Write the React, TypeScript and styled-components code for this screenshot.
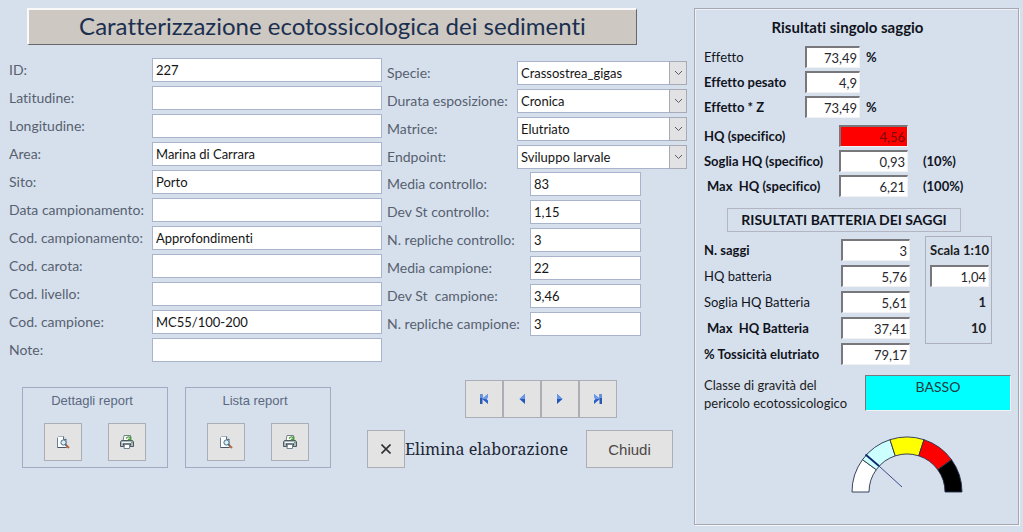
import React, { useId } from "react";
import styled, { createGlobalStyle } from "styled-components";

const GlobalStyle = createGlobalStyle`
  * { box-sizing: border-box; }
  body {
    margin: 0;
    background: #d6e0ed;
    font-family: Lato, "Open Sans", sans-serif;
    font-size: 13px;
    font-variant-ligatures: none;
    color: #1c1c22;
  }
  input, select, button { font: inherit; color: inherit; margin: 0; border-radius: 0; }
`;

const Page = styled.main`
  display: grid;
  grid-template-columns: minmax(0, 1fr) 325px;
  gap: 7px;
  padding: 8px 4px 6px 9px;
`;

const Workspace = styled.div`
  display: flex;
  flex-direction: column;
`;

const Title = styled.h1`
  margin: 0 50px 0 18px;
  height: 37px;
  line-height: 32px;
  text-align: center;
  font-size: 24px;
  font-weight: 400;
  color: #1b3050;
  background: #cdc8c1;
  border: solid;
  border-width: 2px 1px 1px 2px;
  border-color: #fafafa #66666c #66666c #fafafa;
  white-space: nowrap;
`;

const Columns = styled.div`
  display: flex;
  gap: 5px;
  margin-top: 13px;
`;

const Column = styled.div<{ $grow: number; $top?: number }>`
  flex: ${(p) => p.$grow} 1 0;
  min-width: 0;
  display: flex;
  flex-direction: column;
  gap: 3px;
  padding-top: ${(p) => p.$top ?? 0}px;
`;

const Stack = styled.div`
  display: flex;
  flex-direction: column;
  gap: 4px;
`;

const FieldRow = styled.div<{ $label: number; $end?: number }>`
  display: grid;
  grid-template-columns: ${(p) => p.$label}px minmax(0, 1fr);
  align-items: center;
  height: 24px;
  padding-right: ${(p) => p.$end ?? 0}px;
`;

const FieldLabel = styled.label`
  color: #56606f;
  font-size: 14px;
  line-height: 20px;
  white-space: pre;
`;

const TextBox = styled.input`
  width: 100%;
  height: 24px;
  padding: 0 3px;
  border: 1px solid #a9b3cb;
  background: #fff;
  color: #151515;
  outline: none;
`;

const SelectWrap = styled.div`
  position: relative;
  height: 24px;
`;

const SelectBox = styled.select`
  width: 100%;
  height: 24px;
  padding: 0 20px 0 3px;
  border: 1px solid #a9b3cb;
  background: #fff;
  color: #151515;
  appearance: none;
  outline: none;
`;

const SelectArrow = styled.span`
  position: absolute;
  top: 0;
  right: 0;
  width: 18px;
  height: 24px;
  display: grid;
  place-items: center;
  background: #e2e2e4;
  border: 1px solid #a7abb5;
  pointer-events: none;
`;

const Footer = styled.div`
  display: flex;
  justify-content: space-between;
  margin-top: 18px;
  padding: 0 14px 0 13px;
`;

const Reports = styled.div`
  display: flex;
  gap: 17px;
  padding-top: 7px;
`;

const ReportBox = styled.section`
  width: 146px;
  height: 81px;
  border: 1px solid #a0acc3;
  display: flex;
  flex-direction: column;
  align-items: center;
  gap: 12px;
  padding-top: 3px;
`;

const ReportTitle = styled.h2`
  margin: 0;
  padding-right: 6px;
  font: 400 13px/20px "Liberation Sans", Arial, sans-serif;
  color: #5b6880;
`;

const ReportButtons = styled.div`
  display: flex;
  gap: 26px;
`;

const ToolButton = styled.button<{ $wide?: boolean }>`
  width: ${(p) => (p.$wide ? 87 : 38)}px;
  height: 38px;
  padding: 0;
  display: grid;
  place-items: center;
  background: #e3e3e4;
  border: 1px solid #abaeb6;
  color: #4d4744;
  font: 400 15px "Liberation Sans", Arial, sans-serif;
`;

const Actions = styled.div`
  display: flex;
  flex-direction: column;
  gap: 12px;
`;

const NavButtons = styled.div`
  display: flex;
  align-self: center;
  padding-left: 41px;
`;

const ActionRow = styled.div`
  display: flex;
  align-items: center;
`;

const DeleteLabel = styled.label`
  width: 181px;
  font: 400 16px "Noto Serif", Cambria, "Liberation Serif", serif;
  color: #1d2735;
  white-space: nowrap;
`;

const Panel = styled.section`
  border: 1px solid #a4a8b2;
  box-shadow: inset 1px 1px 0 #eef2f8, 1px 1px 0 #f4f6fa;
  padding: 8px 7px 0 9px;
  min-height: 517px;
`;

const PanelTitle = styled.h2`
  margin: 0 0 9px;
  padding-right: 20px;
  font-size: 15px;
  line-height: 20px;
  font-weight: 700;
  text-align: center;
  color: #10131c;
`;

const ResultGrid = styled.div<{ $label: number; $value: number; $gap: number; $top?: number }>`
  display: grid;
  grid-template-columns: ${(p) => p.$label}px ${(p) => p.$value}px auto;
  grid-auto-rows: 22px;
  row-gap: ${(p) => p.$gap}px;
  align-items: center;
  margin-top: ${(p) => p.$top ?? 0}px;
`;

const ResultLabel = styled.label<{ $bold?: boolean; $indent?: boolean }>`
  font-weight: ${(p) => (p.$bold ? 700 : 400)};
  font-size: 13px;
  padding-left: ${(p) => (p.$indent ? 3 : 0)}px;
  line-height: 18px;
  color: #10131c;
  white-space: pre;
`;

const ResultBox = styled.input<{ $alert?: boolean }>`
  width: 100%;
  height: 22px;
  padding: 0 2px;
  text-align: right;
  outline: none;
  color: ${(p) => (p.$alert ? "#7d0b0b" : "#26262c")};
  background: ${(p) => (p.$alert ? "#ff0000" : "#fff")};
  border: 2px solid;
  border-color: #77777c #f2f2f4 #f2f2f4 #77777c;
  border-width: 2px 1px 1px 2px;
`;

const Unit = styled.span<{ $start: number }>`
  padding-left: ${(p) => p.$start}px;
  font-weight: 700;
  font-size: 13px;
  color: #10131c;
`;

const BatteryTitle = styled.h2`
  width: 234px;
  height: 24px;
  margin: 11px 0 0 23px;
  border: 1px solid #b3b6c2;
  font-size: 14px;
  line-height: 22px;
  font-weight: 700;
  text-align: center;
  color: #10131c;
`;

const Battery = styled.div`
  display: flex;
  gap: 15px;
  margin-top: 4px;
`;

const ScaleBox = styled.fieldset`
  width: 67px;
  height: 108px;
  min-width: 0;
  margin: 0;
  padding: 2px 2px 0 4px;
  border: 1px solid #adb0bd;
  display: grid;
  grid-auto-rows: 22px;
  row-gap: 4px;
  align-content: start;
  align-items: center;
  text-align: right;
  font-size: 13px;
  font-weight: 700;
`;

const ScaleTitle = styled.label`
  font-size: 13px;
  white-space: nowrap;
`;

const ScaleInput = styled(ResultBox)`
  font-weight: 400;
`;

const ScaleValue = styled.span`
  padding-right: 3px;
`;

const ClassRow = styled.div`
  display: grid;
  grid-template-columns: 161px minmax(0, 1fr);
  margin-top: 10px;
`;

const ClassLabel = styled.label`
  line-height: 18px;
  padding-top: 1px;
  font-size: 13px;
`;

const ClassValue = styled.output`
  height: 36px;
  background: #00ffff;
  border: 1px solid;
  border-color: #77777c #f2f2f4 #f2f2f4 #77777c;
  text-align: center;
  font-size: 14px;
  line-height: 22px;
  color: #203840;
`;

const Gauge = styled.svg`
  display: block;
  margin: 23px 0 0 147px;
`;

const leftFields: [string, string][] = [
  ["ID:", "227"],
  ["Latitudine:", ""],
  ["Longitudine:", ""],
  ["Area:", "Marina di Carrara"],
  ["Sito:", "Porto"],
  ["Data campionamento:", ""],
  ["Cod. campionamento:", "Approfondimenti"],
  ["Cod. carota:", ""],
  ["Cod. livello:", ""],
  ["Cod. campione:", "MC55/100-200"],
  ["Note:", ""],
];

const choices: [string, string][] = [
  ["Specie:", "Crassostrea_gigas"],
  ["Durata esposizione:", "Cronica"],
  ["Matrice:", "Elutriato"],
  ["Endpoint:", "Sviluppo larvale"],
];

const measures: [string, string][] = [
  ["Media controllo:", "83"],
  ["Dev St controllo:", "1,15"],
  ["N. repliche controllo:", "3"],
  ["Media campione:", "22"],
  ["Dev St  campione:", "3,46"],
  ["N. repliche campione:", "3"],
];

function Field({ label, value, labelWidth, end }: { label: string; value: string; labelWidth: number; end?: number }) {
  const id = useId();
  return (
    <FieldRow $label={labelWidth} $end={end}>
      <FieldLabel htmlFor={id}>{label}</FieldLabel>
      <TextBox id={id} defaultValue={value} />
    </FieldRow>
  );
}

function Choice({ label, value }: { label: string; value: string }) {
  const id = useId();
  return (
    <FieldRow $label={130}>
      <FieldLabel htmlFor={id}>{label}</FieldLabel>
      <SelectWrap>
        <SelectBox id={id} defaultValue={value}>
          <option>{value}</option>
        </SelectBox>
        <SelectArrow>
          <svg width="9" height="6" viewBox="0 0 9 6" fill="none" stroke="#5b5b60" aria-hidden="true">
            <path d="M1 1l3.5 3.5L8 1" />
          </svg>
        </SelectArrow>
      </SelectWrap>
    </FieldRow>
  );
}

interface ResultProps {
  label: string;
  value: string;
  bold?: boolean;
  indent?: boolean;
  alert?: boolean;
  unit?: string;
  unitStart?: number;
}

function Result({ label, value, bold, indent, alert, unit, unitStart = 6 }: ResultProps) {
  const id = useId();
  return (
    <>
      <ResultLabel htmlFor={id} $bold={bold} $indent={indent}>{label}</ResultLabel>
      <ResultBox id={id} readOnly value={value} $alert={alert} />
      {unit ? <Unit $start={unitStart}>{unit}</Unit> : <span />}
    </>
  );
}

function PreviewIcon() {
  return (
    <svg width="13" height="13" viewBox="0 0 13 13" aria-hidden="true">
      <path d="M1.5 .5H6.5L9.5 3.5V11.5H.5V1.5Z" fill="#fff" stroke="#a3b0bd" />
      <path d="M.5 11.5H9.5" stroke="#42566d" />
      <path d="M.5 2V11.5" stroke="#6d8194" />
      <path d="M6.5 .5V3.5H9.5" fill="#dbe6ee" stroke="#5b6f83" />
      <circle cx="6.5" cy="6.5" r="2.6" fill="#d7f1fa" stroke="#4b6a80" />
      <path d="M8.4 8.6L9.6 9.8" stroke="#3d4a55" strokeWidth="1.6" />
      <path d="M9.4 9.6L12 12" stroke="#b5683c" strokeWidth="2" />
    </svg>
  );
}

function PrinterIcon() {
  return (
    <svg width="14" height="14" viewBox="0 0 14 14" aria-hidden="true">
      <path d="M4 .5H10.5V6H3Z" fill="#fff" stroke="#718087" />
      <path d="M1.5 5.5H12.5L13.5 7V11.5H.5V7Z" fill="#aeb7bd" stroke="#4b5961" />
      <path d="M2 7.5H12" stroke="#f1f5f6" />
      <path d="M3 9.5H11" stroke="#39434a" strokeWidth="2" />
      <path d="M4.5 9.5H9.5V13.5H4Z" fill="#fff" stroke="#718590" />
      <path d="M6 3.5C8 1 10 1.5 10.5 4M10.8 1.5V4.5H7.8" fill="none" stroke="#4c9a3e" strokeWidth="1.3" />
      <path d="M11 7.5H12.5" stroke="#48a345" />
    </svg>
  );
}

function NavIcon({ back, end }: { back?: boolean; end?: boolean }) {
  return (
    <svg width="10" height="10" viewBox="0 0 10 10" aria-hidden="true">
      <g transform={back ? "translate(10 0) scale(-1 1)" : undefined}>
        {end ? (
          <>
            <path d="M1 0L7 5L1 10V6.5L2.5 5L1 3.5Z" fill="#2a63c4" />
            <path d="M1 0L7 5H2.5L1 3.5Z" fill="#6c9ceb" />
            <path d="M6.5 0H9V10H6.5Z" fill="#2b58b0" />
            <path d="M6.5 0H9V4H6.5Z" fill="#6590da" />
          </>
        ) : (
          <>
            <path d="M2 0L7.5 5L2 10Z" fill="#2257b8" />
            <path d="M2 0L7.5 5H2Z" fill="#6596ea" />
          </>
        )}
      </g>
    </svg>
  );
}

function Report({ title }: { title: string }) {
  return (
    <ReportBox>
      <ReportTitle>{title}</ReportTitle>
      <ReportButtons>
        <ToolButton type="button" aria-label={`Anteprima ${title}`}><PreviewIcon /></ToolButton>
        <ToolButton type="button" aria-label={`Stampa ${title}`}><PrinterIcon /></ToolButton>
      </ReportButtons>
    </ReportBox>
  );
}

const CX = 56;
const CY = 57;
const point = (radius: number, degrees: number) => {
  const a = (degrees * Math.PI) / 180;
  return `${(CX + radius * Math.cos(a)).toFixed(2)} ${(CY - radius * Math.sin(a)).toFixed(2)}`;
};

function HazardGauge() {
  const fills = ["#ffffff", "#ccffff", "#ffff00", "#ff0000", "#000000"];
  return (
    <Gauge width="112" height="58" viewBox="0 0 112 58" role="img" aria-label="Indice di pericolo">
      {fills.map((fill, i) => {
        const from = 180 - i * 36;
        const to = from - 36;
        return (
          <path
            key={fill}
            d={`M${point(55, from)}A55 55 0 0 1 ${point(55, to)}L${point(38, to)}A38 38 0 0 0 ${point(38, from)}Z`}
            fill={fill}
            stroke="#26304a"
            strokeWidth="0.9"
          />
        );
      })}
      <path d="M14.5 19.5L28 31" stroke="#10246e" strokeWidth="1.8" />
      <path d="M28 31L51 52" stroke="#10246e" strokeWidth="0.8" />
    </Gauge>
  );
}

export default function App() {
  return (
    <>
      <GlobalStyle />
      <Page>
        <Workspace>
          <Title>Caratterizzazione ecotossicologica dei sedimenti</Title>
          <Columns>
            <Column $grow={373}>
              <Stack>
                {leftFields.map(([label, value]) => (
                  <Field key={label} label={label} value={value} labelWidth={143} />
                ))}
              </Stack>
            </Column>
            <Column $grow={300} $top={3}>
              <Stack>
                {choices.map(([label, value]) => (
                  <Choice key={label} label={label} value={value} />
                ))}
              </Stack>
              <Stack>
                {measures.map(([label, value]) => (
                  <Field key={label} label={label} value={value} labelWidth={143} end={46} />
                ))}
              </Stack>
            </Column>
          </Columns>
          <Footer>
            <Reports>
              <Report title="Dettagli report" />
              <Report title="Lista report" />
            </Reports>
            <Actions>
              <NavButtons>
                <ToolButton type="button" aria-label="Primo"><NavIcon back end /></ToolButton>
                <ToolButton type="button" aria-label="Precedente"><NavIcon back /></ToolButton>
                <ToolButton type="button" aria-label="Successivo"><NavIcon /></ToolButton>
                <ToolButton type="button" aria-label="Ultimo"><NavIcon end /></ToolButton>
              </NavButtons>
              <ActionRow>
                <ToolButton type="button" id="delete">
                  <svg width="10" height="10" viewBox="0 0 10 10" stroke="#303036" strokeWidth="1.6" aria-hidden="true">
                    <path d="M.5 .5L9.5 9.5M9.5 .5L.5 9.5" />
                  </svg>
                </ToolButton>
                <DeleteLabel htmlFor="delete">Elimina elaborazione</DeleteLabel>
                <ToolButton type="button" $wide>Chiudi</ToolButton>
              </ActionRow>
            </Actions>
          </Footer>
        </Workspace>
        <Panel>
          <PanelTitle>Risultati singolo saggio</PanelTitle>
          <ResultGrid $label={101} $value={55} $gap={3}>
            <Result label="Effetto" value="73,49" unit="%" />
            <Result label="Effetto pesato" value="4,9" bold />
            <Result label="Effetto * Z" value="73,49" bold unit="%" />
          </ResultGrid>
          <ResultGrid $label={135} $value={69} $gap={3} $top={7}>
            <Result label="HQ (specifico)" value="4,56" bold alert />
            <Result label="Soglia HQ (specifico)" value="0,93" bold unit="(10%)" unitStart={15} />
            <Result label="Max  HQ (specifico)" value="6,21" bold indent unit="(100%)" unitStart={15} />
          </ResultGrid>
          <BatteryTitle>RISULTATI BATTERIA DEI SAGGI</BatteryTitle>
          <Battery>
            <ResultGrid $label={137} $value={69} $gap={4} $top={3}>
              <Result label="N. saggi" value="3" bold />
              <Result label="HQ batteria" value="5,76" />
              <Result label="Soglia HQ Batteria" value="5,61" />
              <Result label="Max  HQ Batteria" value="37,41" bold indent />
              <Result label="% Tossicità elutriato" value="79,17" bold />
            </ResultGrid>
            <ScaleBox>
              <ScaleTitle htmlFor="scale">Scala 1:10</ScaleTitle>
              <ScaleInput id="scale" readOnly value="1,04" />
              <ScaleValue>1</ScaleValue>
              <ScaleValue>10</ScaleValue>
            </ScaleBox>
          </Battery>
          <ClassRow>
            <ClassLabel htmlFor="hazard">Classe di gravità del pericolo ecotossicologico</ClassLabel>
            <ClassValue id="hazard">BASSO</ClassValue>
          </ClassRow>
          <HazardGauge />
        </Panel>
      </Page>
    </>
  );
}
